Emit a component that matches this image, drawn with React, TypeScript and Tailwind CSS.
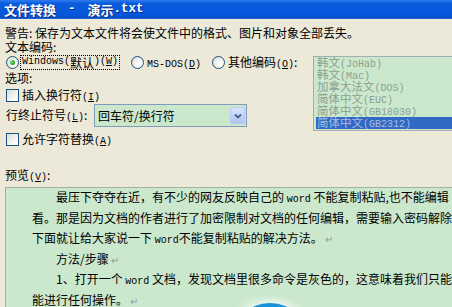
import React from "react";

const CJK = "font-['Noto_Sans_CJK_SC','Noto_Sans',sans-serif]";

function M({ children, cls = "" }: { children: React.ReactNode; cls?: string }) {
  return <span className={`font-['Liberation_Mono',monospace] text-[10px] leading-none ${cls}`}>{children}</span>;
}

function Key({ k }: { k: string }) {
  return (
    <M>
      (<span className="underline">{k}</span>)
    </M>
  );
}

function Radio({ on = false }: { on?: boolean }) {
  return (
    <span className="flex h-[13px] w-[13px] shrink-0 items-center justify-center rounded-full border border-[#1c5180] bg-[radial-gradient(circle_at_70%_70%,#ffffff_0%,#f2f2ee_45%,#d6d5cc_100%)]">
      {on && <span className="h-[5px] w-[5px] rounded-full bg-[radial-gradient(circle_at_35%_35%,#7ee07e_0%,#21a121_70%,#178417_100%)]" />}
    </span>
  );
}

function Check() {
  return (
    <span className="block h-[13px] w-[13px] shrink-0 border border-[#1c5180] bg-[linear-gradient(135deg,#dcdcd7_0%,#f4f4f0_60%,#ffffff_100%)]" />
  );
}

function PM() {
  return <span className="ml-[2px] text-[10px] leading-none text-[#8a9aa6]">↵</span>;
}

function Line({ children, indent = false }: { children: React.ReactNode; indent?: boolean }) {
  return (
    <div className={`flex h-[20.5px] items-center whitespace-nowrap leading-[14px] ${indent ? "pl-[24px]" : ""}`}>
      <span>{children}</span>
    </div>
  );
}

export default function App() {
  const items = ["韩文", "韩文", "加拿大法文", "简体中文", "简体中文", "简体中文"];
  const subs = ["(JoHab)", "(Mac)", "(DOS)", "(EUC)", "(GB18030)", "(GB2312)"];
  return (
    <div className={`relative h-[307px] w-[452px] overflow-hidden bg-[#ece9d8] text-[12px] text-black ${CJK}`}>
      {/* Title bar */}
      <div className="flex h-[19px] items-center bg-[linear-gradient(to_bottom,#2f7cf0_0%,#0a5cdc_18%,#0556dc_80%,#0a4fc8_92%,#2a6ee0_100%)] pl-[4px] text-[13px] font-bold leading-[19px] text-white [text-shadow:1px_1px_0_#0a2a80]">
        <span>文件转换</span>
        <span className="mx-[12px] font-['Liberation_Mono',monospace] text-[12.5px]">-</span>
        <span>演示</span>
        <span className="font-['Liberation_Mono',monospace] text-[12.5px]">.txt</span>
      </div>

      <div className="px-[5px]">
        <div className="mt-[7px] whitespace-nowrap leading-[14px]">警告: 保存为文本文件将会使文件中的格式、图片和对象全部丢失。</div>
        <div className="leading-[14px]">文本编码:</div>

        <div className="flex">
          {/* left column */}
          <div className="w-[308px] shrink-0">
            <div className="flex h-[16px] items-center whitespace-nowrap">
              <div className="flex w-[126px] items-center pl-[1px]">
                <Radio on />
                <span className="ml-[1px] flex h-[15px] items-center border border-dotted border-black px-[1px] leading-[13px]">
                  <M>Windows</M>
                  <M>(</M>默认<M>)</M>
                  <Key k="W" />
                </span>
              </div>
              <div className="flex w-[81px] items-center">
                <Radio />
                <span className="ml-[3px] leading-[13px]">
                  <M>MS-DOS</M>
                  <Key k="D" />
                </span>
              </div>
              <div className="flex items-center">
                <Radio />
                <span className="ml-[3px] leading-[13px]">
                  其他编码<Key k="O" />:
                </span>
              </div>
            </div>

            <div className="mt-[1px] leading-[14px]">选项:</div>

            <div className="mt-[2px] flex h-[16px] items-center pl-[1px]">
              <Check />
              <span className="ml-[3px] leading-[13px]">
                插入换行符<Key k="I" />
              </span>
            </div>

            <div className="mt-[1px] flex h-[23px] items-center pl-[1px]">
              <span className="w-[88px] whitespace-nowrap leading-[13px]">
                行终止符号<Key k="L" />:
              </span>
              <div className="flex h-[23px] w-[153px] items-center border border-[#7f9db9] bg-[#cbe8cd] pl-[3px] pr-[1px]">
                <span className="flex-1 leading-[13px]">回车符/换行符</span>
                <span className="flex h-[17px] w-[15px] items-center justify-center rounded-[2px] border border-[#b9c9ef] bg-[linear-gradient(to_bottom,#dbe5fd_0%,#c3d3fb_50%,#b1c6f6_100%)]">
                  <svg width="8" height="6" viewBox="0 0 8 6">
                    <path d="M1 1.5 L4 4.5 L7 1.5" fill="none" stroke="#4d6185" strokeWidth="1.8" />
                  </svg>
                </span>
              </div>
            </div>

            <div className="mt-[4px] flex h-[16px] items-center pl-[1px]">
              <Check />
              <span className="ml-[3px] leading-[13px]">
                允许字符替换<Key k="A" />
              </span>
            </div>
          </div>

          {/* listbox */}
          <div className="mt-[2px] h-[75px] w-[150px] shrink-0 border border-[#a3adb5] bg-[#cbe8cd] pl-[2px]">
            {items.map((t, i) => (
              <div
                key={i}
                className={`flex h-[12px] items-center whitespace-nowrap pl-[1px] text-[11.5px] leading-[12px] ${
                  i === 5 ? "bg-[#316ac5] text-[#a9bde0]" : "text-[#8d9e90]"
                }`}
              >
                <span className="leading-[11px]">
                  {t}
                  <M cls="text-[10px]">{subs[i]}</M>
                </span>
              </div>
            ))}
          </div>
        </div>

        <div className="mt-[21px] leading-[14px]">
          预览<Key k="V" />:
        </div>
      </div>

      {/* preview */}
      <div className="relative ml-[5px] mt-[4px] h-[140px] w-[460px] overflow-hidden border border-[#a3b1a5] bg-[#cbe8cd] pl-[26px] text-[12px]">
        <div className="-mt-[1px]">
          <Line indent>
            最压下夺夺在近，有不少的网友反映自己的 <M>word</M> 不能复制粘贴,也不能编辑
          </Line>
          <Line>看。那是因为文档的作者进行了加密限制对文档的任何编辑，需要输入密码解除</Line>
          <Line>
            下面就让给大家说一下 <M>word</M>不能复制粘贴的解决方法。
            <PM />
          </Line>
          <Line indent>
            方法/步骤
            <PM />
          </Line>
          <Line indent>
            1、打开一个 <M>word</M> 文档，发现文档里很多命令是灰色的，这意味着我们只能
          </Line>
          <Line>
            能进行任何操作。
            <PM />
          </Line>
        </div>
        <div className="absolute left-[224px] top-[115px] h-[80px] w-[80px] rounded-full bg-[#1595d8] shadow-[0_0_6px_4px_rgba(255,255,255,0.6)]" />
      </div>
    </div>
  );
}
